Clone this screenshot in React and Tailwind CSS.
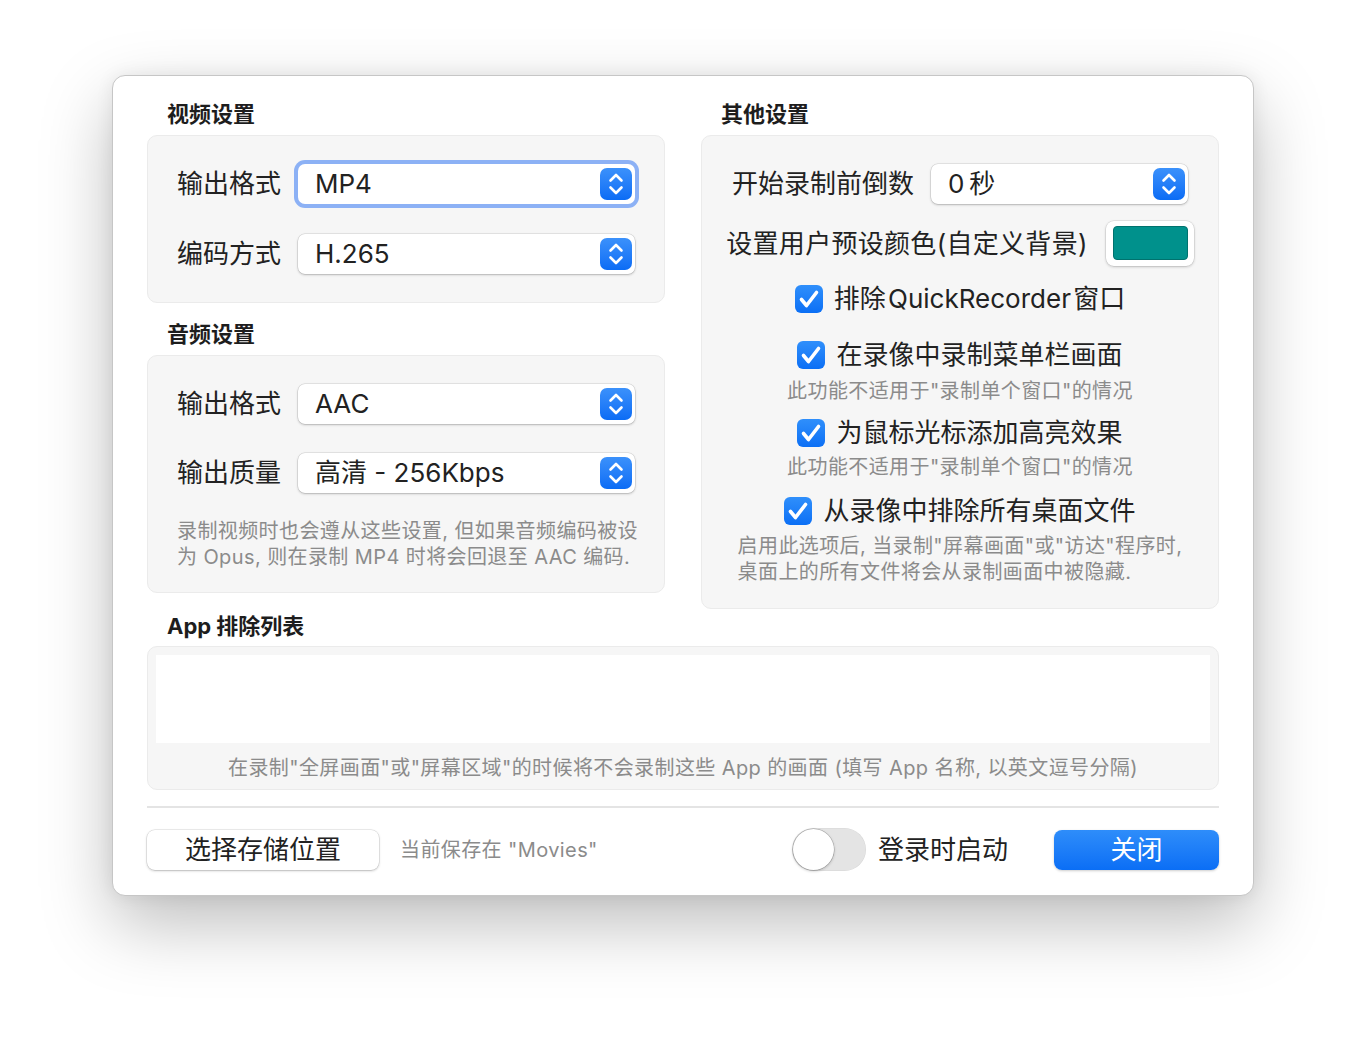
import React from 'react';

function Stepper() {
    return (
        <div className="w-[32px] h-[32px] shrink-0 rounded-[7px] bg-linear-to-b from-[#3b91fb] to-[#0a6cf5] flex items-center justify-center">
            <svg width="32" height="32" viewBox="0 0 32 32" fill="none" stroke="white" strokeWidth="2.6" strokeLinecap="round" strokeLinejoin="round">
                <path d="M10.5 12.5 L16 7 L21.5 12.5" />
                <path d="M10.5 19.5 L16 25 L21.5 19.5" />
            </svg>
        </div>
    );
}

function Popup({ value, focused, className = '' }) {
    return (
        <div
            className={`h-[40px] rounded-[7px] bg-white flex items-center pl-[17px] pr-[3px] shadow-[0_0_0_0.5px_rgba(0,0,0,0.14),0_1px_2.5px_rgba(0,0,0,0.22)] ${focused ? 'ring-[4px] ring-[#8cb1f5]' : ''} ${className}`}
        >
            <span className="flex-1 text-[26px] leading-[40px] text-[#222] whitespace-nowrap">{value}</span>
            <Stepper />
        </div>
    );
}

function Checkbox() {
    return (
        <div className="w-[28px] h-[28px] shrink-0 rounded-[6px] bg-linear-to-b from-[#2f8ffb] to-[#0a6ff5] flex items-center justify-center">
            <svg width="28" height="28" viewBox="0 0 28 28" fill="none" stroke="white" strokeWidth="3.6" strokeLinecap="round" strokeLinejoin="round">
                <path d="M6.5 14.5 L11.5 20.5 L21.5 7.5" />
            </svg>
        </div>
    );
}

function CheckRow({ label, className = '' }) {
    return (
        <div className={`h-[36px] flex items-center justify-center gap-[11px] ${className}`}>
            <Checkbox />
            <span className="text-[26px] leading-[36px] text-[#222] whitespace-nowrap">{label}</span>
        </div>
    );
}

function Note({ children, className = '' }) {
    return <div className={`text-[20px] tracking-[0.4px] text-[#8b8b8b] whitespace-nowrap ${className}`}>{children}</div>;
}

function FieldRow({ label, value, focused, className = '' }) {
    return (
        <div className={`flex items-center gap-[17px] ${className}`}>
            <span className="text-[26px] leading-[40px] text-[#222] whitespace-nowrap">{label}</span>
            <Popup value={value} focused={focused} className="flex-1" />
        </div>
    );
}

function Title({ children, className = '' }) {
    return <div className={`h-[30px] leading-[30px] pl-[20px] text-[22px] font-bold text-[#1d1d1d] ${className}`}>{children}</div>;
}

export default function App() {
    return (
        <div className="w-[1366px] h-[1044px] bg-white pt-[75px] pl-[112px] font-['Inter','Noto_Sans_CJK_SC',sans-serif]">
            <div className="w-[1142px] h-[821px] rounded-[13px] bg-white border border-[#c6c6c6] shadow-[0_0_18px_rgba(0,0,0,0.07),0_28px_70px_rgba(0,0,0,0.26)] px-[34px] pt-[23px] flex flex-col">
                <div className="grid grid-cols-2 gap-[36px] items-start">
                    {/* Left column */}
                    <div className="flex flex-col">
                        <Title className="mb-[6px]">视频设置</Title>
                        <div className="rounded-[10px] bg-[#f6f6f6] border border-[#ebebeb] px-[29px] pt-[28px] pb-[28px]">
                            <FieldRow label="输出格式" value="MP4" focused />
                            <FieldRow label="编码方式" value="H.265" className="mt-[30px]" />
                        </div>
                        <Title className="mt-[16px] mb-[6px]">音频设置</Title>
                        <div className="rounded-[10px] bg-[#f6f6f6] border border-[#ebebeb] px-[29px] pt-[28px] pb-[22px]">
                            <FieldRow label="输出格式" value="AAC" />
                            <FieldRow label="输出质量" value="高清 - 256Kbps" className="mt-[29px]" />
                            <Note className="mt-[25px] leading-[26px]">
                                录制视频时也会遵从这些设置, 但如果音频编码被设<br />
                                为 Opus, 则在录制 MP4 时将会回退至 AAC 编码.
                            </Note>
                        </div>
                    </div>

                    {/* Right column */}
                    <div className="flex flex-col">
                        <Title className="mb-[6px]">其他设置</Title>
                        <div className="rounded-[10px] bg-[#f6f6f6] border border-[#ebebeb] px-[20px] pt-[28px] pb-[23px]">
                            <div className="flex items-center justify-center gap-[17px]">
                                <span className="text-[26px] leading-[40px] text-[#222] whitespace-nowrap">开始录制前倒数</span>
                                <Popup value={'0\u2009秒'} className="w-[257px] shrink-0" />
                            </div>
                            <div className="flex items-center justify-center gap-[18px] mt-[17px]">
                                <span className="text-[26px] tracking-[0.3px] leading-[45px] text-[#222] whitespace-nowrap">设置用户预设颜色(自定义背景)</span>
                                <div className="w-[88px] h-[45px] shrink-0 rounded-[8px] bg-white shadow-[0_0_0_0.5px_rgba(0,0,0,0.12),0_1px_3px_rgba(0,0,0,0.2)] pl-[7px] pr-[6px] pt-[5px] pb-[6px]">
                                    <div className="w-full h-full rounded-[4px] bg-[#00918c] border border-[#00726e]" />
                                </div>
                            </div>
                            <CheckRow label={'排除\u200aQuickRecorder\u200a窗口'} className="mt-[15px]" />
                            <CheckRow label="在录像中录制菜单栏画面" className="mt-[20px]" />
                            <Note className="mt-[4px] leading-[28px] text-center">此功能不适用于"录制单个窗口"的情况</Note>
                            <CheckRow label="为鼠标光标添加高亮效果" className="mt-[10px]" />
                            <Note className="mt-[2px] leading-[28px] text-center">此功能不适用于"录制单个窗口"的情况</Note>
                            <CheckRow label="从录像中排除所有桌面文件" className="mt-[12px]" />
                            <div className="mt-[4px] flex justify-center">
                                <Note className="leading-[26px] text-left">
                                    启用此选项后, 当录制"屏幕画面"或"访达"程序时,<br />
                                    桌面上的所有文件将会从录制画面中被隐藏.
                                </Note>
                            </div>
                        </div>
                    </div>
                </div>

                {/* App exclusion list */}
                <Title className="mt-[2px] mb-[5px]">App 排除列表</Title>
                <div className="rounded-[10px] bg-[#f6f6f6] border border-[#ebebeb] px-[8px] pt-[8px] pb-[6px]">
                    <div className="h-[88px] bg-white" />
                    <Note className="mt-[10px] leading-[30px] text-center">
                        在录制"全屏画面"或"屏幕区域"的时候将不会录制这些 App 的画面 (填写 App 名称, 以英文逗号分隔)
                    </Note>
                </div>

                <div className="mt-[16px] h-[2px] bg-[#e4e4e4]" />

                {/* Footer */}
                <div className="mt-[20px] h-[43px] flex items-center">
                    <button className="w-[232px] h-[40px] rounded-[8px] bg-white text-[26px] leading-[40px] text-[#222] shadow-[0_0_0_0.5px_rgba(0,0,0,0.14),0_1px_2.5px_rgba(0,0,0,0.22)]">
                        选择存储位置
                    </button>
                    <span className="ml-[21px] text-[20px] tracking-[0.4px] text-[#8b8b8b]">当前保存在 "Movies"</span>
                    <div className="flex-1" />
                    <div className="w-[74px] h-[43px] rounded-full bg-[#e4e4e4] flex items-center px-[1px] shadow-[inset_0_0_0_0.5px_rgba(0,0,0,0.06)]">
                        <div className="w-[41px] h-[41px] rounded-full bg-white shadow-[0_0_0_0.5px_rgba(0,0,0,0.25),0_1px_3px_rgba(0,0,0,0.25)]" />
                    </div>
                    <span className="ml-[12px] text-[26px] leading-[43px] text-[#222]">登录时启动</span>
                    <button className="ml-[46px] w-[165px] h-[40px] rounded-[8px] bg-linear-to-b from-[#2e8dfa] to-[#0a6ef5] text-[26px] leading-[40px] text-white shadow-[0_1px_2.5px_rgba(0,0,0,0.2)]">
                        关闭
                    </button>
                </div>
            </div>
        </div>
    );
}
